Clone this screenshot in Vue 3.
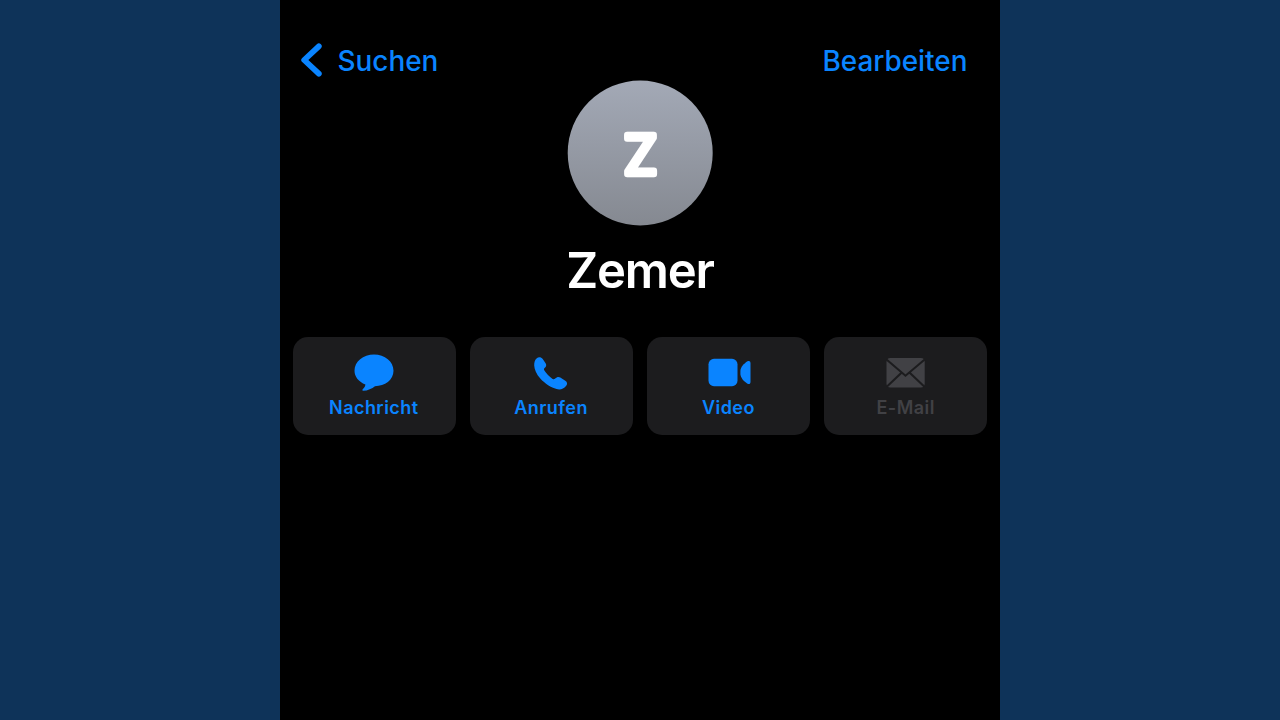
<script setup>
const actions = [
  { id: 'message', label: 'Nachricht' },
  { id: 'call', label: 'Anrufen' },
  { id: 'video', label: 'Video' },
  { id: 'mail', label: 'E-Mail', disabled: true },
]
</script>

<template>
  <div class="stage">
    <main class="phone">
      <header class="nav">
        <button class="link back">
          <svg width="22" height="36" viewBox="0 0 22 36">
            <path d="M18.800 3.300 4.200 17 18.800 30.700" fill="none" stroke="currentColor" stroke-width="5.800" stroke-linecap="round" stroke-linejoin="round" />
          </svg>
          <span>Suchen</span>
        </button>
        <button class="link edit">Bearbeiten</button>
      </header>

      <svg class="avatar" width="146" height="146" viewBox="0 0 146 146">
        <defs>
          <linearGradient id="avatar-fill" x1="0" y1="0" x2="0" y2="1">
            <stop offset="0" stop-color="#a3a9b6" />
            <stop offset="1" stop-color="#858991" />
          </linearGradient>
        </defs>
        <circle cx="73.200" cy="73" r="72.500" fill="url(#avatar-fill)" />
        <text class="initial" x="73.500" y="94" text-anchor="middle">Z</text>
      </svg>
      <h1 class="name">Zemer</h1>

      <nav class="actions">
        <button v-for="a in actions" :key="a.id" class="tile" :class="{ disabled: a.disabled }">
          <svg class="icon" width="48" height="40" viewBox="0 0 48 40">
            <path v-if="a.id === 'message'" fill="currentColor" transform="translate(1 0)" d="M24 1.500C34.800 1.500 43.500 8.600 43.500 17.800S34.800 33.200 25 33.200C22 35.600 17.800 37.600 13.200 37.800 12.200 37.800 12 37 12.800 36.300 14.400 34.800 15.200 33.600 15.400 31.600 8.800 28.700 4.500 24 4.500 17.800 4.500 8.600 13.200 1.500 24 1.500Z" />
            <path v-else-if="a.id === 'call'" fill="currentColor" d="M9.800 5.200C11.400 3.800 14.200 3.900 15.700 5.900L18.600 10.200C19.700 12 19.300 13.500 17.600 15.100 16.800 15.900 16.800 16.600 17.400 17.600 19.400 20.700 22.200 23.600 25.600 25.900 26.700 26.600 27.300 26.400 28.200 25.500 29.700 23.900 31.600 23.400 33.300 24.400L38.300 27.700C40.400 29 40.600 31.200 39 33 36.600 35.700 33.500 37.200 29.500 36 24.200 34.500 17.900 30.700 13.300 25.500 9.300 21 7.400 16.200 7.200 12.400 7.100 9.200 7.900 6.800 9.800 5.200Z" />
            <g v-else-if="a.id === 'video'" fill="currentColor">
              <rect x="4.500" y="5.800" width="29" height="27.400" rx="5.500" />
              <path d="M36.400 18C36.400 14.400 40 10.400 43.500 8.300 45.200 7.300 46.500 8.200 46.500 10.200V28.800C46.500 30.800 45.200 31.700 43.500 30.700 40 28.600 36.400 24.600 36.400 21Z" />
            </g>
            <g v-else transform="translate(0.500 0)">
              <rect x="5" y="5" width="38.200" height="29.500" rx="4" fill="currentColor" />
              <path d="M5 6.500 24 22.700 43.200 6.500M5.500 33.500 20 19.700M42.700 33.500 28.200 19.700" fill="none" stroke="#1c1c1e" stroke-width="2.100" />
            </g>
          </svg>
          <span class="label">{{ a.label }}</span>
        </button>
      </nav>
    </main>
  </div>
</template>

<style>
html, body { margin: 0; background: #0e3359; }
</style>

<style scoped>
.stage {
  display: flex;
  justify-content: center;
  width: 1280px;
  height: 720px;
  overflow: hidden;
  background: #0e3359;
  font-family: Inter, "Liberation Sans", sans-serif;
}
.phone {
  display: flex;
  flex-direction: column;
  align-items: center;
  width: 720px;
  height: 720px;
  background: #000;
}
button {
  margin: 0;
  padding: 0;
  border: 0;
  background: none;
  font-family: inherit;
  color: #0a84ff;
}
.nav {
  display: flex;
  justify-content: space-between;
  align-items: center;
  box-sizing: border-box;
  width: 100%;
  height: 80px;
  padding: 42px 32.500px 0 20px;
}
.link {
  display: flex;
  align-items: center;
  font-size: 27.900px;
  line-height: 38px;
  font-weight: 500;
}
.back { gap: 15.500px; }
.avatar { flex: none; }
.initial {
  font-size: 54px;
  font-weight: 300;
  fill: #fff;
  stroke: #fff;
  stroke-width: 6.500px;
  stroke-linejoin: round;
}
.name {
  margin: 15px 0 0;
  font-size: 49px;
  line-height: 60px;
  font-weight: 600;
  letter-spacing: -1.200px;
  color: #fff;
}
.actions {
  display: grid;
  grid-template-columns: repeat(4, 163px);
  gap: 14.300px;
  margin-top: 36px;
}
.tile {
  display: flex;
  flex-direction: column;
  align-items: center;
  box-sizing: border-box;
  height: 98px;
  padding: 16px 1.500px 0 0;
  border-radius: 15px;
  background: #1c1c1e;
}
.tile.disabled { color: #414145; }
.icon { flex: none; }
.label {
  margin: 3px 0 0 1px;
  font-size: 18px;
  line-height: 24px;
  font-weight: 600;
  letter-spacing: 0.450px;
}
</style>
